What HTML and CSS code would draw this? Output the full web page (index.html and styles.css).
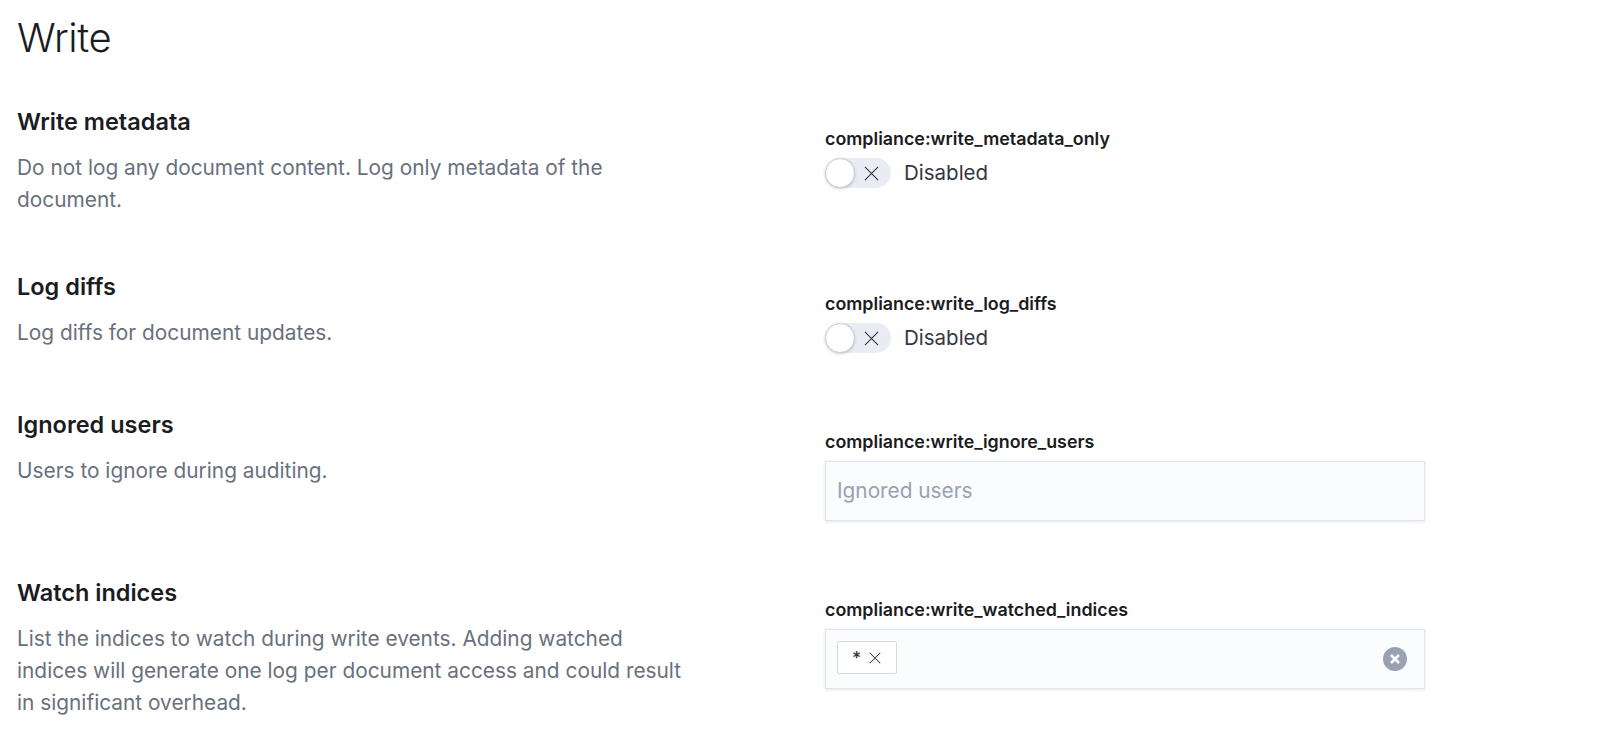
FILE: index.html
```html
<!DOCTYPE html>
<html>

<head>
    <meta charset="UTF-8">
    <meta name="viewport" content="width=device-width, initial-scale=1.0">
    <title>Write</title>
    <link rel="stylesheet" href="styles.css">
</head>

<body>
    <h1 class="page-title">Write</h1>

    <div class="setting setting-metadata">
        <div class="setting-info">
            <h3>Write metadata</h3>
            <p>Do not log any document content. Log only metadata of the document.</p>
        </div>
        <div class="setting-field">
            <label>compliance:write_metadata_only</label>
            <div class="switch-row">
                <span class="switch">
                    <span class="switch-thumb"></span>
                    <svg class="switch-x" viewBox="0 0 16 16"><path d="M1 1l14 14M15 1L1 15"/></svg>
                </span>
                <span class="switch-label">Disabled</span>
            </div>
        </div>
    </div>

    <div class="setting setting-diffs">
        <div class="setting-info">
            <h3>Log diffs</h3>
            <p>Log diffs for document updates.</p>
        </div>
        <div class="setting-field">
            <label>compliance:write_log_diffs</label>
            <div class="switch-row">
                <span class="switch">
                    <span class="switch-thumb"></span>
                    <svg class="switch-x" viewBox="0 0 16 16"><path d="M1 1l14 14M15 1L1 15"/></svg>
                </span>
                <span class="switch-label">Disabled</span>
            </div>
        </div>
    </div>

    <div class="setting setting-users">
        <div class="setting-info">
            <h3>Ignored users</h3>
            <p>Users to ignore during auditing.</p>
        </div>
        <div class="setting-field">
            <label>compliance:write_ignore_users</label>
            <div class="combo">
                <span class="combo-placeholder">Ignored users</span>
            </div>
        </div>
    </div>

    <div class="setting setting-indices">
        <div class="setting-info">
            <h3>Watch indices</h3>
            <p>List the indices to watch during write events. Adding watched indices will generate one log per document access and could result in significant overhead.</p>
        </div>
        <div class="setting-field">
            <label>compliance:write_watched_indices</label>
            <div class="combo">
                <span class="pill">
                    <span class="pill-text">*</span>
                    <svg class="pill-x" viewBox="0 0 16 16"><path d="M2 2l12 12M14 2L2 14"/></svg>
                </span>
                <svg class="combo-clear" viewBox="0 0 24 24">
                    <circle cx="12" cy="12" r="12"/>
                    <path d="M8 8l8 8M16 8l-8 8"/>
                </svg>
            </div>
        </div>
    </div>
</body>

</html>
```

FILE: styles.css
```css
html,
body {
    height: 729px;
    overflow: hidden;
}

body {
    margin: 0;
    padding: 0 0 0 17px;
    font-family: Inter, "Noto Sans", sans-serif;
    background-color: #fff;
    color: #1a1c21;
}

.page-title {
    margin: 0;
    padding-top: 14px;
    font-size: 40px;
    line-height: 48px;
    font-weight: 300;
    letter-spacing: -0.4px;
}

.setting {
    display: flex;
}

.setting-metadata {
    margin-top: 46px;
    height: 165px;
}

.setting-diffs {
    height: 138px;
}

.setting-users {
    height: 168px;
}

.setting-info {
    width: 672px;
    margin-right: 136px;
}

.setting-info h3 {
    margin: 0;
    font-size: 23.5px;
    line-height: 28px;
    font-weight: 600;
}

.setting-info p {
    margin: 16px 0 0;
    font-size: 20.85px;
    line-height: 32px;
    color: #69707d;
}

.setting-field {
    width: 600px;
    padding-top: 21px;
}

.setting-field label {
    display: block;
    font-size: 17.85px;
    line-height: 20px;
    font-weight: 600;
    margin-bottom: 9px;
}

.switch-row {
    display: flex;
    align-items: center;
    height: 30px;
}

.switch {
    position: relative;
    display: block;
    width: 66px;
    height: 30px;
    border-radius: 15px;
    background-color: #e9edf3;
}

.switch-thumb {
    position: absolute;
    left: 0;
    top: 0;
    width: 28px;
    height: 28px;
    border: 1px solid #c9ced6;
    border-radius: 50%;
    background-color: #fff;
    box-shadow: 0 1px 3px rgba(0, 0, 0, 0.2);
}

.switch-x {
    position: absolute;
    left: 39px;
    top: 8px;
    width: 15px;
    height: 15px;
    fill: none;
    stroke: #343741;
    stroke-width: 1.2;
}

.switch-label {
    margin-left: 13px;
    padding-bottom: 2px;
    font-size: 20.5px;
    color: #343741;
}

.combo {
    display: flex;
    align-items: center;
    justify-content: space-between;
    box-sizing: border-box;
    height: 60px;
    padding: 0 17px 0 11px;
    background-color: #fbfcfd;
    border: 1px solid #e1e4ee;
    box-shadow: 0 1px 3px rgba(40, 50, 90, 0.12);
}

.combo-placeholder {
    padding-bottom: 2px;
    font-size: 20.8px;
    color: #98a2b3;
}

.pill {
    display: flex;
    align-items: center;
    box-sizing: border-box;
    width: 60px;
    height: 33px;
    margin-bottom: 3px;
    padding-left: 14px;
    background-color: #fff;
    border: 1px solid #d3dae6;
    border-radius: 2px;
}

.pill-text {
    font-size: 17.85px;
    font-weight: 500;
    color: #343741;
}

.pill-x {
    margin-left: 7px;
    width: 14px;
    height: 14px;
    fill: none;
    stroke: #343741;
    stroke-width: 1.2;
}

.combo-clear {
    width: 24px;
    height: 24px;
}

.combo-clear circle {
    fill: #98a2b3;
}

.combo-clear path {
    fill: none;
    stroke: #fff;
    stroke-width: 2.6;
}
```
